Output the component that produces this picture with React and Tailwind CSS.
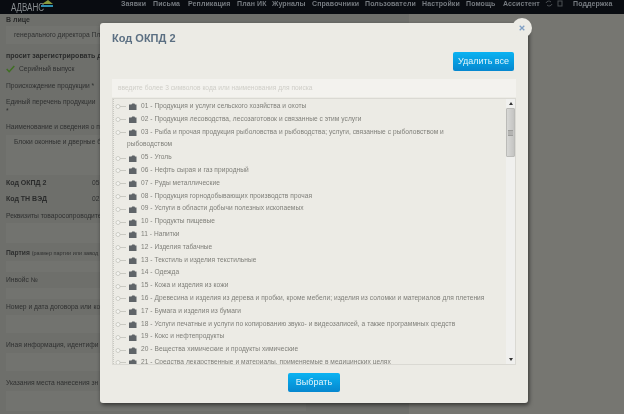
import React from "react";

const nav = [
  ["Заявки", "w-[32px]"], ["Письма", "w-[35px]"], ["Репликация", "w-[49px]"], ["План ИК", "w-[35px]"],
  ["Журналы", "w-[40px]"], ["Справочники", "w-[53px]"], ["Пользователи", "w-[57px]"], ["Настройки", "w-[44px]"],
  ["Помощь", "w-[37px]"], ["Ассистент", "w-[42px]"],
];

const rows = [
  "01 - Продукция и услуги сельского хозяйства и охоты",
  "02 - Продукция лесоводства, лесозаготовок и связанные с этим услуги",
  "03 - Рыба и прочая продукция рыболовства и рыбоводства; услуги, связанные с рыболовством и",
  "05 - Уголь",
  "06 - Нефть сырая и газ природный",
  "07 - Руды металлические",
  "08 - Продукция горнодобывающих производств прочая",
  "09 - Услуги в области добычи полезных ископаемых",
  "10 - Продукты пищевые",
  "11 - Напитки",
  "12 - Изделия табачные",
  "13 - Текстиль и изделия текстильные",
  "14 - Одежда",
  "15 - Кожа и изделия из кожи",
  "16 - Древесина и изделия из дерева и пробки, кроме мебели; изделия из соломки и материалов для плетения",
  "17 - Бумага и изделия из бумаги",
  "18 - Услуги печатные и услуги по копированию звуко- и видеозаписей, а также программных средств",
  "19 - Кокс и нефтепродукты",
  "20 - Вещества химические и продукты химические",
  "21 - Средства лекарственные и материалы, применяемые в медицинских целях",
];

function Node() {
  return (
    <svg width="26" height="12" viewBox="0 0 26 12" className="shrink-0">
      <path d="M6 6.500H12" stroke="#c9c9c2" strokeWidth="1" />
      <circle cx="4" cy="6.500" r="2" fill="#f5f5f1" stroke="#c4c4bd" strokeWidth="0.8" />
      <path d="M15 4.500h2.500l.7-1H20.500l.5 1h1.500V10H15z" fill="#5f6468" />
    </svg>
  );
}

function Label({ children, bold, className = "" }) {
  return (
    <div className={`whitespace-nowrap leading-[10px] ${bold ? "text-[7px] font-bold text-[#2a2b2b]" : "text-[6.700px] text-[#2f3030]"} ${className}`}>
      {children}
    </div>
  );
}

function Field({ className = "", children }) {
  return <div className={`w-[300px] bg-[#72736f] px-2 text-[6.700px] text-[#2f3030] ${className}`}>{children}</div>;
}

export default function App() {
  return (
    <div
      className="relative h-[414px] w-[624px] overflow-hidden bg-[#767671] blur-[0.35px]"
      style={{ fontFamily: '"Liberation Sans", Arial, sans-serif' }}
    >
      <header className="flex h-[14px] items-start overflow-hidden bg-[#090c11] pl-[11px]">
        <div className="flex w-[110px] shrink-0 items-start">
          <span className="mt-[3px] origin-top scale-y-125 text-[8px] leading-[8px] text-[#8a8f92]">АДВАНС</span>
          <svg width="12" height="8" viewBox="0 0 12 8" className="ml-[-3px]">
            <path d="M1 4 7 0l5 4z" fill="#8a9a3c" />
            <path d="M0 5h12v2H0z" fill="#2f8fb0" />
          </svg>
        </div>
        <nav className="mt-[-1px] flex shrink-0 items-start text-[7px] font-bold leading-[10px] tracking-[0.1px] text-[#767b80]">
          {nav.map(([t, w]) => (
            <span key={t} className={`${w} whitespace-nowrap`}>{t}</span>
          ))}
          <span className="flex w-[28px] items-center gap-[4px] pt-[1px]">
            <svg width="8" height="7" viewBox="0 0 8 7"><path d="M1 3a3 3 0 0 1 5-1M7 4a3 3 0 0 1-5 1" fill="none" stroke="#4c5054" /></svg>
            <svg width="6" height="7" viewBox="0 0 6 7"><rect x="1" y="1" width="4" height="5" fill="none" stroke="#4c5054" /></svg>
          </span>
          <span className="whitespace-nowrap">Поддержка</span>
        </nav>
      </header>

      <main className="h-[400px] w-[409px] bg-[#6e6f6b] pl-[6px] pt-0">
        <Label bold className="pt-[1px]">В лице</Label>
        <Field className="mt-[1px] h-[18px] leading-[18px]">генерального директора Пло</Field>
        <Label bold className="mt-[7px]">просит зарегистрировать д</Label>
        <div className="mt-[3px] flex h-[10px] items-center">
          <svg width="9" height="8" viewBox="0 0 9 8"><path d="M.7 4l2.500 2.700L8.300 1" fill="none" stroke="#3f6f22" strokeWidth="1.500" /></svg>
          <span className="ml-[4px] text-[6.700px] text-[#2f3030]">Серийный выпуск</span>
        </div>
        <Label className="mt-[7px]">Происхождение продукции *</Label>
        <Label className="mt-[6px]">Единый перечень продукции</Label>
        <Label className="mt-[-1px]">*</Label>
        <Label className="mt-[6px]">Наименование и сведения о п</Label>
        <Field className="mt-[3px] h-[40px] pt-[2px] leading-[10px]">Блоки оконные и дверные ба</Field>
        <div className="mt-[3px] flex h-[10px] items-center">
          <Label bold className="w-[86px]">Код ОКПД 2</Label>
          <span className="text-[6.700px] text-[#2f3030]">05</span>
        </div>
        <div className="mt-[6px] flex h-[10px] items-center">
          <Label bold className="w-[86px]">Код ТН ВЭД</Label>
          <span className="text-[6.700px] text-[#2f3030]">02</span>
        </div>
        <Label className="mt-[7px]">Реквизиты товаросопроводите</Label>
        <Field className="mt-[2px] h-[20px]" />
        <Label className="mt-[5px]">
          <b>Партия</b> <span className="text-[5.500px]">(размер партии или завод</span>
        </Label>
        <Field className="mt-[3px] h-[11px]" />
        <Label className="mt-[3px]">Инвойс №</Label>
        <Field className="mt-[3px] h-[11px]" />
        <Label className="mt-[3px]">Номер и дата договора или ко</Label>
        <Field className="mt-[3px] h-[18px]" />
        <Label className="mt-[7px]">Иная информация, идентифи</Label>
        <Field className="mt-[3px] h-[18px]" />
        <Label className="mt-[7px]">Указания места нанесения зн</Label>
        <Field className="mt-[3px] h-[20px]" />
      </main>

      <section className="absolute left-[100px] top-[23px] flex h-[380px] w-[428px] flex-col rounded-[3px] bg-[#ecebe5] px-[12px] shadow-[1px_2px_4px_rgba(0,0,0,0.55)]">
        <h2 className="mt-[6px] text-[11px] font-bold leading-[18px] text-[#5b6f82]">Код ОКПД 2</h2>
        <div className="flex justify-end pr-[2px]">
          <button className="mt-[5px] h-[19px] w-[61px] rounded-[2px] bg-gradient-to-b from-[#0bb3f2] to-[#0687cf] text-[9px] text-[#e4f4fb]">
            Удалить все
          </button>
        </div>
        <div className="mt-[8px] flex h-[18px] w-[404px] items-center bg-[#f3f2ee] px-[6px] text-[6.600px] tracking-[0.03px] text-[#cfcec8]">
          введите более 3 символов кода или наименования для поиска
        </div>
        <div className="mt-[1px] flex h-[267px] w-[404px] overflow-hidden border border-[#dad9d3]">
          <ul className="min-w-0 flex-1 overflow-hidden border-l border-dotted border-[#c9c9c2] pt-[1px] text-[6.600px] leading-[12.800px] tracking-[0.05px] text-[#7f7f79]">
            {rows.map((r) => (
              <li key={r}>
                <div className="flex h-[12.800px] items-center whitespace-nowrap">
                  <Node />
                  <span className="ml-[1px]">{r}</span>
                </div>
                {r.startsWith("03") && <div className="h-[12.800px] pl-[13px]">рыбоводством</div>}
              </li>
            ))}
          </ul>
          <div className="flex w-[9px] shrink-0 flex-col items-center bg-[#f0f0ee]">
            <div className="mt-[3px] h-0 w-0 border-x-[2px] border-b-[3px] border-x-transparent border-b-[#333]" />
            <div className="mt-[3px] flex h-[49px] w-[9px] items-center justify-center rounded-[1px] border border-[#bbbbb8] bg-gradient-to-r from-[#d8d8d6] to-[#c4c4c2]">
              <div className="h-[6px] w-[5px] border-y border-[#9d9d9b] bg-[#b4b4b2]" />
            </div>
            <div className="mt-auto mb-[3px] h-0 w-0 border-x-[2px] border-t-[3px] border-x-transparent border-t-[#333]" />
          </div>
        </div>
        <div className="flex justify-center">
          <button className="mt-[8px] h-[19px] w-[52px] rounded-[2px] bg-gradient-to-b from-[#0bb3f2] to-[#0687cf] text-[9px] text-[#e4f4fb]">
            Выбрать
          </button>
        </div>
      </section>

      <button className="absolute left-[512px] top-[18px] flex h-[20px] w-[20px] items-center justify-center rounded-full bg-[#ecebe5]">
        <svg width="6" height="6" viewBox="0 0 6 6"><path d="M.7.7l4.600 4.600M5.300.7.7 5.300" stroke="#7f9fc4" strokeWidth="1.300" /></svg>
      </button>
    </div>
  );
}
